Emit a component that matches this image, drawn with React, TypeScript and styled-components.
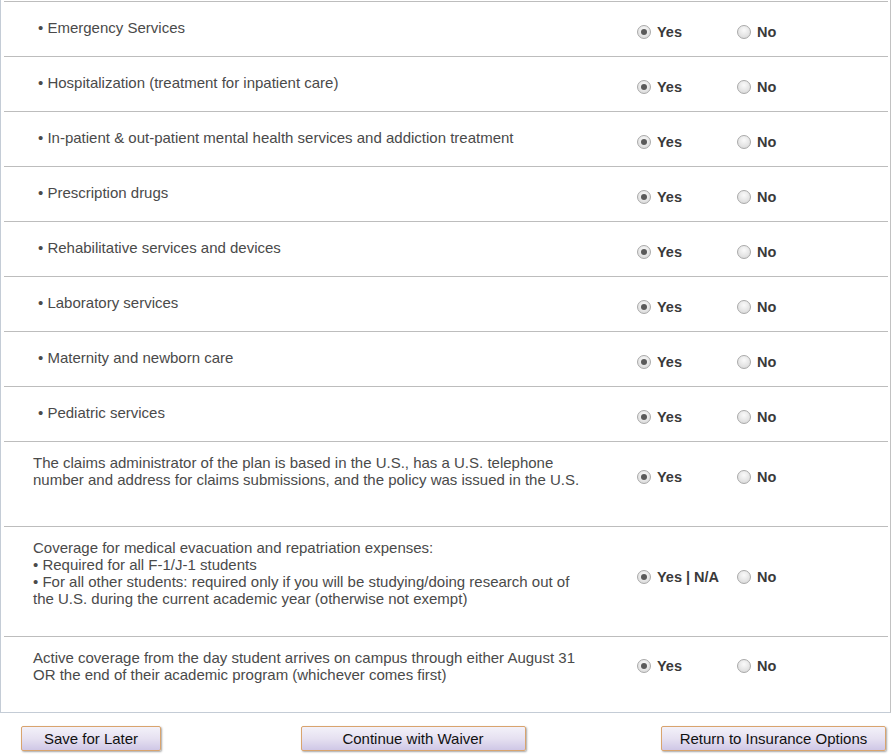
import React from "react";
import styled, { createGlobalStyle } from "styled-components";

const GlobalStyle = createGlobalStyle`
    html, body {
        margin: 0;
        padding: 0;
        background: #ffffff;
        font-family: "Liberation Sans", Arial, sans-serif;
    }
`

type Item = {
    text: React.ReactNode;
    bullet?: boolean;
    height: number;
    textTop: number;
    optTop: number;
    yesLabel?: React.ReactNode;
};

const items: Item[] = [
    {text: "Emergency Services", bullet: true, height: 54, textTop: 17, optTop: 21},
    {text: "Hospitalization (treatment for inpatient care)", bullet: true, height: 54, textTop: 17, optTop: 21},
    {text: "In-patient & out-patient mental health services and addiction treatment", bullet: true, height: 54, textTop: 17, optTop: 21},
    {text: "Prescription drugs", bullet: true, height: 54, textTop: 17, optTop: 21},
    {text: "Rehabilitative services and devices", bullet: true, height: 54, textTop: 17, optTop: 21},
    {text: "Laboratory services", bullet: true, height: 54, textTop: 17, optTop: 21},
    {text: "Maternity and newborn care", bullet: true, height: 54, textTop: 17, optTop: 21},
    {text: "Pediatric services", bullet: true, height: 54, textTop: 17, optTop: 21},
    {
        text: "The claims administrator of the plan is based in the U.S., has a U.S. telephone number and address for claims submissions, and the policy was issued in the U.S.",
        height: 84, textTop: 12, optTop: 26,
    },
    {
        text: <>
            Coverage for medical evacuation and repatriation expenses:<br/>
            • Required for all F-1/J-1 students<br/>
            • For all other students: required only if you will be studying/doing research out of the U.S. during the current academic year (otherwise not exempt)
        </>,
        height: 109, textTop: 12, optTop: 41, yesLabel: "Yes | N/A",
    },
    {
        text: "Active coverage from the day student arrives on campus through either August 31 OR the end of their academic program (whichever comes first)",
        height: 75, textTop: 12, optTop: 20,
    },
];

export default function App() {
    return (
        <>
            <GlobalStyle/>
            <Page>
                <FormBox>
                    {items.map((item, i) => (
                        <Row key={i} $height={item.height}>
                            <Question $top={item.textTop} $bullet={!!item.bullet}>
                                {item.bullet ? <>• {item.text}</> : item.text}
                            </Question>
                            <Option $top={item.optTop}>
                                <Radio type="radio" name={`q${i}`} defaultChecked/>
                                <OptionLabel>{item.yesLabel ?? "Yes"}</OptionLabel>
                            </Option>
                            <Option $top={item.optTop}>
                                <Radio type="radio" name={`q${i}`}/>
                                <OptionLabel>No</OptionLabel>
                            </Option>
                        </Row>
                    ))}
                </FormBox>

                <ButtonBar>
                    <ActionButton $width={140}>Save for Later</ActionButton>
                    <ActionButton $width={225}>Continue with Waiver</ActionButton>
                    <ActionButton $width={225}>Return to Insurance Options</ActionButton>
                </ButtonBar>
            </Page>
        </>
    );
}

const Page = styled.div`
    width: 891px;
    height: 756px;
    overflow: hidden;
`

const FormBox = styled.div`
    width: 884px;
    padding: 1px 2px 0 3px;
    border-left: 1px solid #c4ccd6;
    border-right: 1px solid #c2c2c2;
    border-bottom: 1px solid #c4ccd6;
`

const Row = styled.div<{ $height: number }>`
    display: grid;
    grid-template-columns: 633px 100px 1fr;
    align-items: start;
    height: ${p => p.$height}px;
    border-top: 1px solid #bdbdbd;
`

const Question = styled.div<{ $top: number; $bullet: boolean }>`
    padding: ${p => p.$top}px 46px 0 ${p => p.$bullet ? 34 : 29}px;
    font-size: 15px;
    line-height: 17px;
    color: #4a4a4a;
`

const Option = styled.label<{ $top: number }>`
    display: flex;
    align-items: center;
    margin-top: ${p => p.$top}px;
    height: 17px;
`

const Radio = styled.input`
    appearance: none;
    margin: 0 6px 0 0;
    width: 14px;
    height: 14px;
    border-radius: 50%;
    border: 1px solid #a9a9a9;
    background: radial-gradient(circle at 50% 35%, #fafafa 0%, #e4e4e4 60%, #d2d2d2 100%);
    box-sizing: border-box;
    position: relative;
    flex-shrink: 0;

    &:checked::after {
        content: "";
        position: absolute;
        left: 3px;
        top: 3px;
        width: 6px;
        height: 6px;
        border-radius: 50%;
        background: #5a5a5a;
    }
`

const OptionLabel = styled.span`
    font-size: 14.5px;
    font-weight: bold;
    color: #3a3a3a;
    white-space: nowrap;
`

const ButtonBar = styled.div`
    display: flex;
    justify-content: space-between;
    padding: 13px 5px 0 21px;
`

const ActionButton = styled.button<{ $width: number }>`
    width: ${p => p.$width}px;
    height: 25px;
    padding: 0;
    font-family: "Liberation Sans", Arial, sans-serif;
    font-size: 15px;
    color: #111;
    border: 1px solid #d9a46e;
    border-radius: 2px;
    background: linear-gradient(#f3f1f9, #e6e1f1 50%, #cfc7e6);
    box-shadow: 1px 1px 2px rgba(0, 0, 0, 0.35);
    cursor: pointer;

    &:nth-child(2) {
        margin-left: 4px;
    }
`
